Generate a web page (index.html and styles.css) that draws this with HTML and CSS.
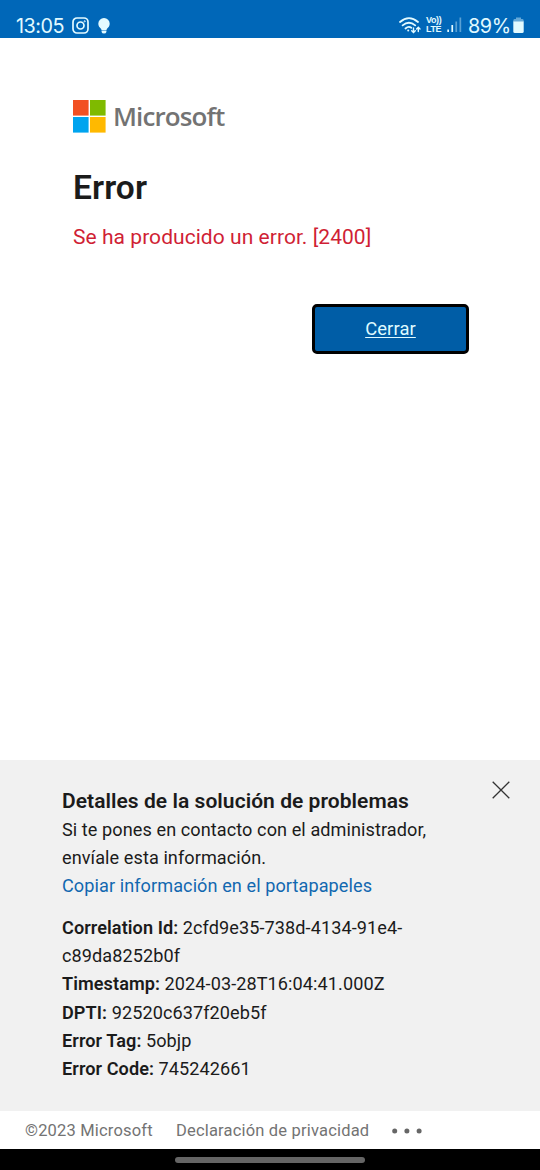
FILE: index.html
```html
<!DOCTYPE html>
<html lang="es">
<head>
<meta charset="utf-8">
<meta name="viewport" content="width=device-width, initial-scale=1">
<title>Error</title>
<link rel="stylesheet" href="styles.css">
</head>
<body>
<header class="status">
  <span class="clock">13:05</span>
  <svg class="insta" width="17" height="17" viewBox="0 0 17 17" fill="none" stroke="currentColor" stroke-width="1.7"><rect x="1" y="1" width="15" height="15" rx="4"/><circle cx="8.5" cy="8.5" r="3.5"/><circle cx="12.7" cy="4.3" r=".6" stroke-width="1"/></svg>
  <svg class="bulb" width="12" height="17" viewBox="0 0 12 17" fill="currentColor"><path d="M6 .1A5.6 5.6 0 0 0 .3 5.8C.3 8 1.6 9.6 3.2 11L3.6 12.5H8.4L8.8 11C10.4 9.6 11.7 8 11.7 5.8A5.6 5.6 0 0 0 6 .1ZM3.6 13H8.4V14Q8 15.6 6 15.6Q4 15.6 3.6 14Z"/></svg>
  <svg class="wifi" width="22" height="18" viewBox="0 0 22 18" fill="none" stroke="currentColor" stroke-width="1.8" stroke-linecap="round"><path d="M1 5Q10 -2.8 19 5M3.6 8.4Q10 3 16.2 8.4M6.5 11.5Q9.6 8.8 12.3 10.8"/><circle cx="9.2" cy="13.4" r="1" fill="currentColor" stroke="none"/><path stroke-width="1.4" d="M14.5 11V15.3M12.7 13.7L14.5 15.5L16.3 13.7M19.3 14.5V10.2M17.6 11.9L19.3 10.2L21 11.9"/></svg>
  <span class="volte"><span>Vo))</span><span>LTE</span></span>
  <svg class="signal" width="15" height="15" viewBox="0 0 15 15" fill="currentColor"><path d="M.3 12.5H2V15H.3ZM4.4 8H6.1V15H4.4Z"/><path opacity=".4" d="M8.4 4.5H10.1V15H8.4ZM12.5 .5H14.2V15H12.5Z"/></svg>
  <span class="percent">89%</span>
  <svg class="battery" width="11" height="17" viewBox="0 0 11 17" fill="currentColor"><path opacity=".45" d="M3 .5H8V2H9.5Q10.7 2 10.7 3.5V5H.3V3.5Q.3 2 1.5 2H3Z"/><path d="M.3 4.5H10.7V14.5Q10.7 16 9.2 16H1.8Q.3 16 .3 14.5Z"/></svg>
</header>
<main class="page">
  <div class="brand">
    <svg width="33" height="33" viewBox="0 0 33 33"><path fill="#f25022" d="M0 0H15.6V15.6H0Z"/><path fill="#7fba00" d="M17 0H32.6V15.6H17Z"/><path fill="#00a4ef" d="M0 17H15.6V32.6H0Z"/><path fill="#ffb900" d="M17 17H32.6V32.6H17Z"/></svg>
    <span class="wordmark">Microsoft</span>
  </div>
  <h1 class="title">Error</h1>
  <p class="message">Se ha producido un error. [2400]</p>
  <button class="close-page">Cerrar</button>
</main>
<section class="details">
  <div class="details-text">
    <h2 class="details-title">Detalles de la solución de problemas</h2>
    <p class="line">Si te pones en contacto con el administrador,<br>envíale esta información.</p>
    <a class="copy">Copiar información en el portapapeles</a>
    <div class="data">
      <p class="line"><b>Correlation Id:</b> 2cfd9e35-738d-4134-91e4-<br>c89da8252b0f</p>
      <p class="line"><b>Timestamp:</b> 2024-03-28T16:04:41.000Z</p>
      <p class="line"><b>DPTI:</b> 92520c637f20eb5f</p>
      <p class="line"><b>Error Tag:</b> 5objp</p>
      <p class="line"><b>Error Code:</b> 745242661</p>
    </div>
  </div>
  <svg class="dismiss" width="18" height="18" viewBox="0 0 18 18" stroke="#333" stroke-width="1.3"><path d="M.7 .7L17.3 17.3M17.3 .7L.7 17.3"/></svg>
</section>
<footer class="footer">
  <span class="copyright">©2023 Microsoft</span>
  <span class="privacy">Declaración de privacidad</span>
  <svg class="dots" width="32" height="6" viewBox="0 0 32 6" fill="#666"><circle cx="2.7" cy="3" r="2.5"/><circle cx="14.9" cy="3" r="2.5"/><circle cx="27.1" cy="3" r="2.5"/></svg>
</footer>
<nav class="gesture"><span class="handle"></span></nav>
</body>
</html>
```
FILE: styles.css
```css
* { box-sizing: border-box; }
body { margin: 0; height: 1170px; display: flex; flex-direction: column; overflow: hidden; background: #fff; color: #1b1b1b; font-family: Roboto, sans-serif; }
h1, h2, p { margin: 0; }
svg { display: block; flex: none; }
.status { height: 38px; flex: none; display: flex; align-items: flex-start; background: #0067b8; color: #e2faff; padding-left: 16px; }
.clock { font: 19.8px/24px Inter, sans-serif; letter-spacing: -.5px; width: 56px; padding-top: 14px; white-space: nowrap; }
.insta { margin-top: 17px; }
.bulb { margin: 18px 0 0 9px; }
.wifi { margin: 17px 0 0 289px; }
.volte { display: flex; flex-direction: column; width: 16px; margin: 16px 0 0 5px; font: 700 9px/9px "Liberation Sans", sans-serif; letter-spacing: -.4px; white-space: nowrap; }
.signal { margin: 17px 0 0 5px; }
.percent { font: 19.8px/24px Inter, sans-serif; letter-spacing: -.4px; width: 44px; margin: 14px 0 0 6px; white-space: nowrap; }
.battery { margin: 17px 0 0 1px; }
.page { height: 722px; flex: none; display: flex; flex-direction: column; align-items: flex-start; padding: 62px 71px 0 73px; }
.brand { display: flex; gap: 7px; height: 33px; align-items: center; }
.wordmark { font: 600 26px/33px "Open Sans", sans-serif; letter-spacing: -.9px; color: #737373; }
.title { margin-top: 34px; font-size: 33.5px; line-height: 42px; font-weight: 600; letter-spacing: .1px; }
.message { margin-top: 14px; font-size: 21px; line-height: 28px; letter-spacing: .05px; color: #d01f35; }
.close-page { align-self: flex-end; margin-top: 53px; width: 157px; height: 50px; padding: 0; border: 3px solid #000; border-radius: 5px; background: #005da6; color: #dffaff; font: 18.4px/24px Roboto, sans-serif; letter-spacing: .1px; text-decoration: underline; text-underline-offset: 2px; text-decoration-thickness: 1px; }
.details { height: 351px; flex: none; display: flex; justify-content: space-between; background: #f1f1f1; padding: 21px 30px 0 62px; }
.details-title { padding-top: 2.5px; font-size: 21px; line-height: 35px; height: 35px; font-weight: 600; letter-spacing: .05px; white-space: nowrap; }
.line, .copy { display: block; font-size: 18.1px; line-height: 28.1px; letter-spacing: .08px; white-space: nowrap; }
.line b { font-weight: 600; }
.copy { color: #1268b0; }
.data { margin-top: 14px; }
.footer { height: 38px; flex: none; display: flex; align-items: center; padding: 1px 0 0 25px; color: #737373; font-size: 16.5px; letter-spacing: .18px; white-space: nowrap; }
.copyright { width: 151px; }
.privacy { width: 216px; }
.gesture { flex: 1; background: #000; display: flex; justify-content: center; align-items: flex-start; padding-top: 8px; }
.handle { width: 190px; height: 6px; border-radius: 3px; background: #666; }
```
